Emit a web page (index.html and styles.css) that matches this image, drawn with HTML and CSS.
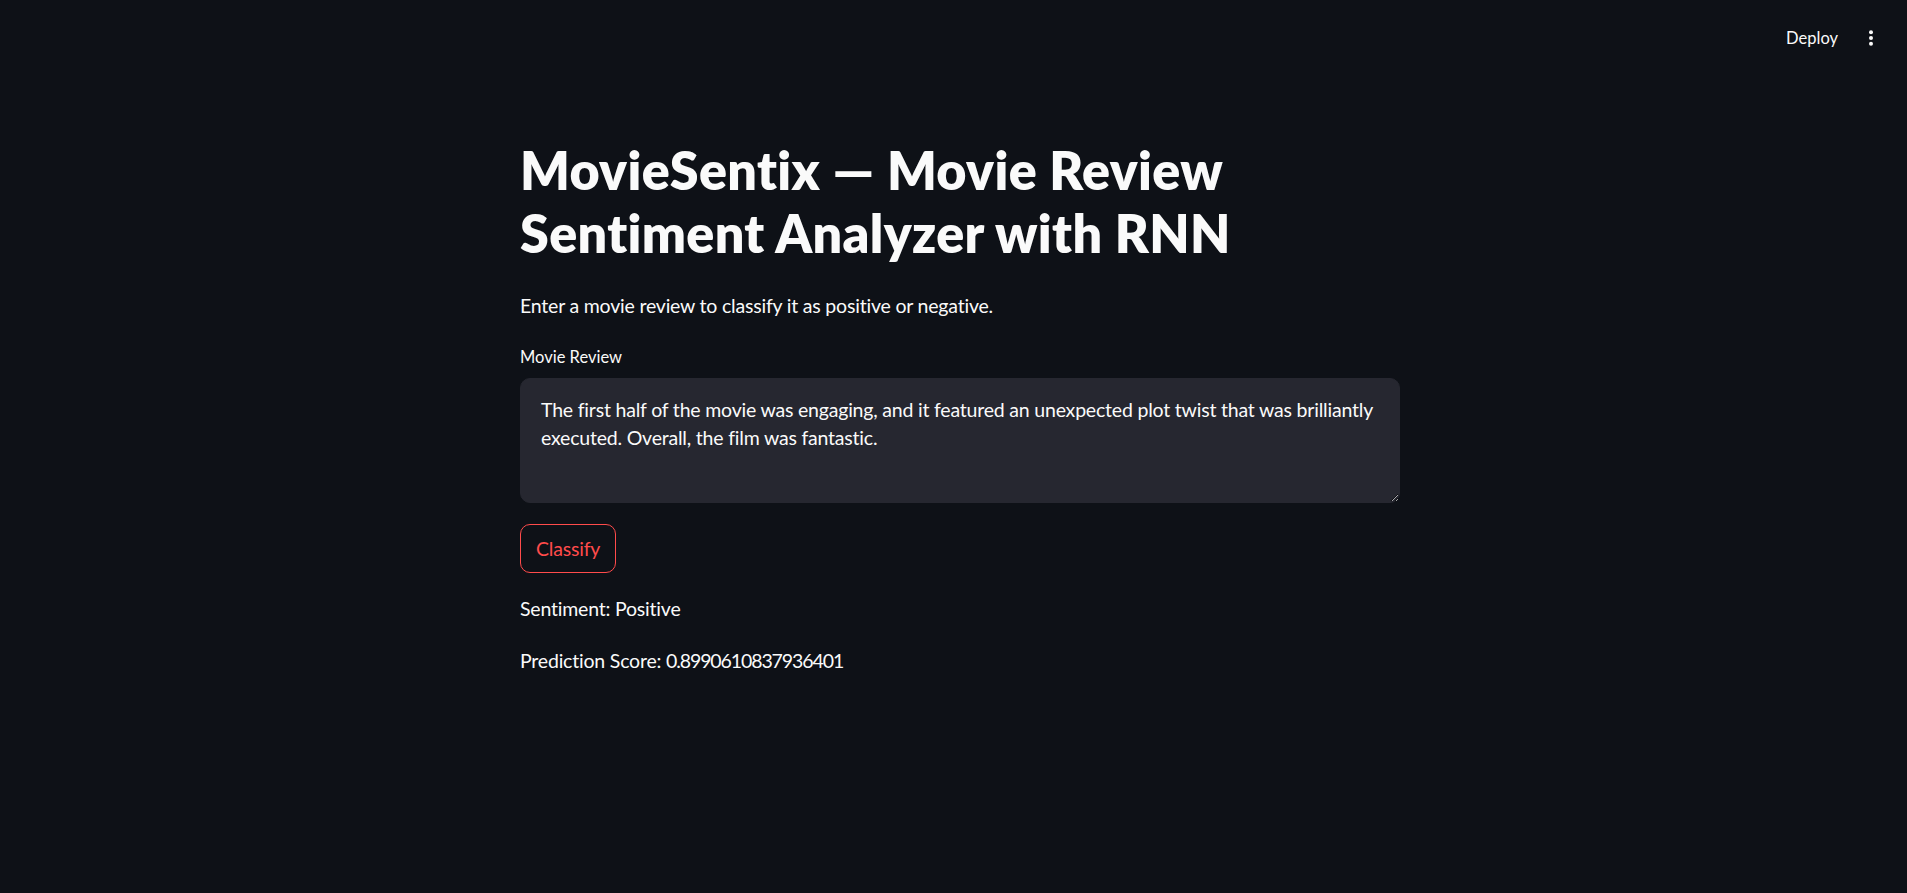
FILE: index.html
```html
<!DOCTYPE html>
<html lang="en">
<head>
<meta charset="utf-8">
<title>MovieSentix</title>
<link rel="stylesheet" href="styles.css">
</head>
<body>
<header class="topbar">
  <button class="deploy">Deploy</button>
  <button class="menu" aria-label="Main menu">
    <svg width="6" height="16" viewBox="0 0 6 16"><circle cx="3" cy="2.2" r="2" fill="#fafafa"/><circle cx="3" cy="8" r="2" fill="#fafafa"/><circle cx="3" cy="13.8" r="2" fill="#fafafa"/></svg>
  </button>
</header>
<div class="app">
  <main class="block">
    <h1 class="title">MovieSentix — Movie Review Sentiment Analyzer with RNN</h1>
    <p class="text sub">Enter a movie review to classify it as positive or negative.</p>
    <div class="field">
      <label class="label" for="review">Movie Review</label>
      <textarea id="review" class="area">The first half of the movie was engaging, and it featured an unexpected plot twist that was brilliantly executed. Overall, the film was fantastic.</textarea>
    </div>
    <div class="actions">
      <button class="classify">Classify</button>
    </div>
    <p class="text">Sentiment: Positive</p>
    <p class="text">Prediction Score: <span class="num">0.8990610837936401</span></p>
  </main>
</div>
</body>
</html>
```
FILE: styles.css
```css
html, body {
  margin: 0;
  padding: 0;
  background: #0e1117;
  color: #fafafa;
  font-family: Lato, "Noto Sans", sans-serif;
}
.topbar {
  height: 75px;
  display: flex;
  justify-content: flex-end;
  align-items: center;
  padding-right: 33px;
  gap: 30px;
}
.deploy {
  background: none;
  border: none;
  color: #fafafa;
  font-family: Lato, sans-serif;
  font-size: 16.5px;
  padding: 0;
  height: 40px;
}
.menu {
  background: none;
  border: none;
  padding: 0;
  display: flex;
  align-items: center;
  height: 40px;
}
.app {
  display: flex;
  justify-content: center;
  padding-left: 13px;
}
.block {
  width: 880px;
  padding-top: 64px;
  display: flex;
  flex-direction: column;
}
.title {
  margin: 0;
  font-size: 52px;
  line-height: 63px;
  font-weight: 800;
  letter-spacing: 0.35px;
  width: 760px;
}
.text {
  margin: 0;
  font-size: 19.5px;
  line-height: 32px;
  letter-spacing: -0.2px;
}
.num {
  letter-spacing: -1.1px;
}
.sub {
  margin-top: 25px;
}
.field {
  margin-top: 23px;
  display: flex;
  flex-direction: column;
  gap: 9px;
}
.label {
  font-size: 16.5px;
  line-height: 24px;
}
.area {
  box-sizing: border-box;
  width: 880px;
  height: 125px;
  background: #262730;
  border: 1px solid #262730;
  border-radius: 10px;
  color: #fafafa;
  font-family: Lato, sans-serif;
  font-size: 19.5px;
  letter-spacing: -0.2px;
  line-height: 28px;
  padding: 17px 20px;
  resize: vertical;
  outline: none;
}
.actions {
  margin-top: 21px;
  margin-bottom: 20px;
}
.classify {
  height: 49px;
  padding: 0 15px;
  background: #0e1117;
  border: 1px solid #ff4b4b;
  border-radius: 10px;
  color: #ff4b4b;
  font-family: Lato, sans-serif;
  font-size: 19.5px;
  letter-spacing: -0.2px;
}
.text + .text {
  margin-top: 20px;
}
```
